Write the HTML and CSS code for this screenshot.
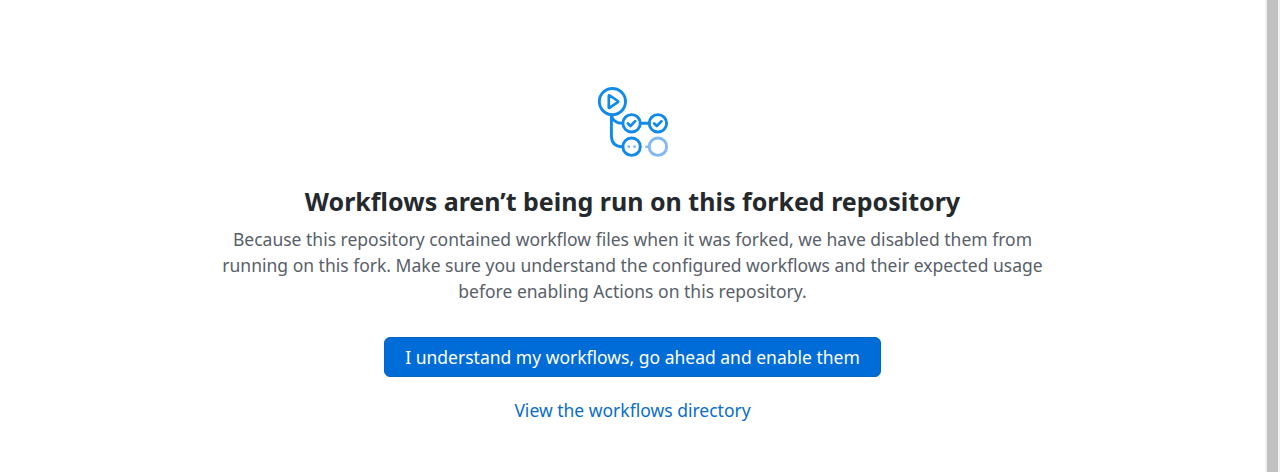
FILE: index.html
```html
<!DOCTYPE html>
<html lang="en">
<head>
<meta charset="utf-8">
<title>Actions</title>
<link rel="stylesheet" href="styles.css">
</head>
<body>
<main class="blankslate">
<svg class="hero-icon" width="72" height="72" viewBox="0.5 0 72 72" fill="none" stroke="#108aeb" stroke-width="2.9" stroke-linecap="round" stroke-linejoin="round">
<circle cx="15.900" cy="15.600" r="13.100"/>
<path d="M12.300 10q0-1.200 1-.5l8 5.500q.8.600 0 1.200l-8 5.500q-1 .7-1-.5z" stroke-width="2.700"/>
<path d="M14.900 29v20.500q0 11.200 11.200 11.200M14.900 29q1.500 8.300 11.200 8.300M43.700 37.300h9"/>
<circle cx="35.100" cy="37.300" r="8.700"/><circle cx="61.400" cy="37.300" r="8.700"/>
<path d="M31.400 37.500l2.600 2.500 4.700-4.900M57.700 37.500l2.600 2.500 4.700-4.900" stroke-width="2.700"/>
<circle cx="35.100" cy="60.700" r="8.700"/>
<g stroke="#80b9f6"><circle cx="61.400" cy="60.700" r="8.700"/><path d="M49.800 60.700h2" stroke-width="2.400"/></g>
<path d="M32.200 60.700h.1M38 60.700h.1" stroke-width="2.700" stroke="#80b9f6"/>
</svg>
<h1 class="title">Workflows aren’t being run on this forked repository</h1>
<p class="description">Because this repository contained workflow files when it was forked, we have disabled them from running on this fork. Make sure you understand the configured workflows and their expected usage before enabling Actions on this repository.</p>
<button class="enable-button" type="button">I understand my workflows, go ahead and enable them</button>
<a class="directory-link" href="#">View the workflows directory</a>
</main>
<div class="scroll-track"><div class="scroll-thumb"></div></div>
</body>
</html>
```
FILE: styles.css
```css
* { box-sizing: border-box; }
body { margin: 0; height: 472px; display: flex; overflow: hidden; background: #fff; font-family: "Noto Sans", sans-serif; }
.blankslate { flex: 1; display: flex; flex-direction: column; align-items: center; padding-top: 86px; }
.hero-icon { flex: none; }
.title { margin: 24px 0 0; font-size: 25px; line-height: 38px; font-weight: 700; color: #24292e; }
.description { margin: 6px 0 0; width: 840px; font-size: 17.5px; line-height: 26px; text-align: center; color: #586069; }
.enable-button { margin-top: 33px; width: 497px; height: 40px; padding: 0; border: 1px solid #0465c4; border-radius: 6px; background: #006cd8; color: #fff; font: 17.5px/26px "Noto Sans", sans-serif; }
.directory-link { margin-top: 20px; font-size: 17.5px; line-height: 26px; color: #096dca; text-decoration: none; }
.scroll-track { width: 15px; padding: 0 2px; background: #f1f1f1; }
.scroll-thumb { height: 100%; background: #c1c1c1; }
```
